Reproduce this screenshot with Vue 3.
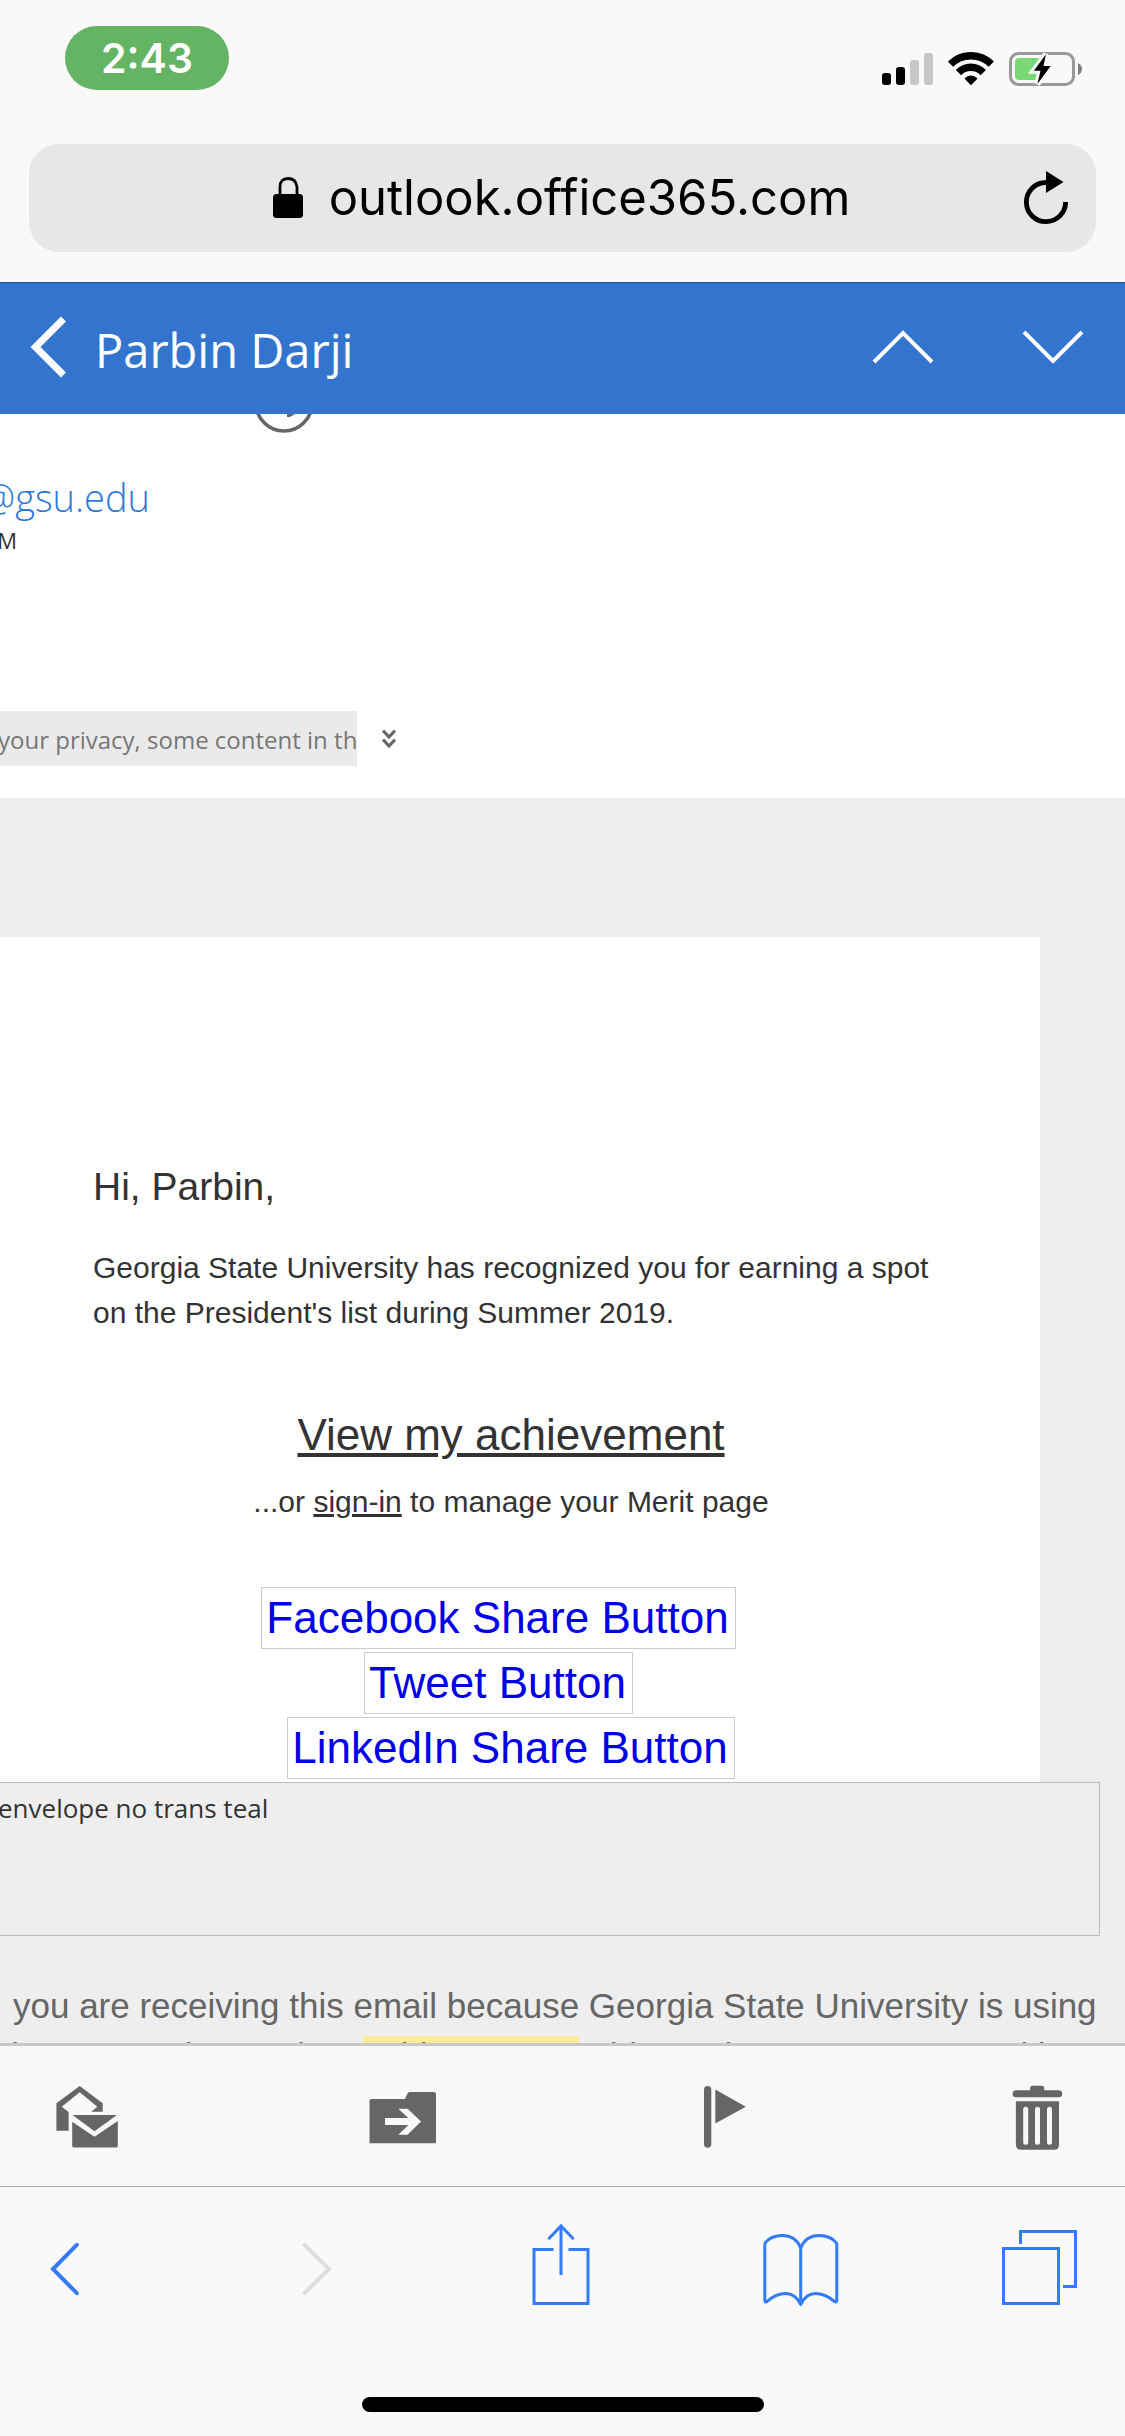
<template>
  <div class="phone">
    <header class="status">
      <span class="status__time">2:43</span>
      <div class="status__icons">
        <svg width="51" height="34" viewBox="0 0 51 34">
          <rect x="0" y="21" width="9" height="12" rx="3" />
          <rect x="14" y="15" width="9" height="18" rx="3" />
          <rect x="28" y="8" width="9" height="25" rx="3" fill="#c7c7c7" />
          <rect x="42" y="1" width="9" height="32" rx="3" fill="#c7c7c7" />
        </svg>
        <svg width="46" height="34" viewBox="0 0 46 34">
          <path d="M2.5 12.2A28.7 28.7 0 0 1 43.3 12.2" fill="none" stroke="#000" stroke-width="7.4" />
          <path d="M10.5 20.6A17 17 0 0 1 35.3 20.6" fill="none" stroke="#000" stroke-width="7.4" />
          <path d="M16.4 26.4Q22.9 20.6 29.6 26.4L23 33.2Z" />
        </svg>
        <svg width="73" height="34" viewBox="0 0 73 34">
          <rect x="1.5" y="1.5" width="63" height="31" rx="8" fill="none" stroke="#999" stroke-width="3" />
          <path d="M69 11Q73 13 73 17T69 23Z" fill="#808080" />
          <path d="M10 6H31L27 28H10Q6 28 6 24V10Q6 6 10 6Z" fill="#78d873" />
          <path d="M37 2.3L24.8 18.7H31.5L28.4 32L41.7 14H34.5Z" stroke="#f9f9f9" stroke-width="6" paint-order="stroke" />
        </svg>
      </div>
    </header>

    <div class="address">
      <div class="address__bar">
        <button class="address__url" type="button">
          <svg width="30" height="42" viewBox="0 0 30 42">
            <path d="M7 18V10Q7 1.5 15 1.5T24 10V18" fill="none" stroke="#000" stroke-width="2.8" />
            <rect x="0" y="17" width="30" height="24" rx="3.5" />
          </svg>
          <span>outlook.office365.com</span>
        </button>
        <button type="button" aria-label="Reload">
          <svg width="44" height="54" viewBox="0 0 44 54">
            <path d="M22 11.500A19.600 19.600 0 1 0 41.600 31" fill="none" stroke="#000" stroke-width="4.800" />
            <path d="M22 0L39.500 11L22 22Z" />
          </svg>
        </button>
      </div>
    </div>

    <nav class="titlebar">
      <button type="button" aria-label="Back">
        <svg width="38" height="62" viewBox="0 0 38 62">
          <path d="M34.500 3L6.500 31L34.500 59" fill="none" stroke="#fff" stroke-width="7" />
        </svg>
      </button>
      <h1 class="titlebar__name">Parbin Darji</h1>
      <div class="titlebar__arrows">
        <button type="button" aria-label="Previous message">
          <svg width="62" height="36" viewBox="0 0 62 36">
            <path d="M2 33L31 4L60 33" fill="none" stroke="#fff" stroke-width="4" />
          </svg>
        </button>
        <button type="button" aria-label="Next message">
          <svg width="62" height="36" viewBox="0 0 62 36">
            <path d="M2 3L31 32L60 3" fill="none" stroke="#fff" stroke-width="4" />
          </svg>
        </button>
      </div>
    </nav>

    <main class="mail">
      <div class="mail__head">
        <svg class="mail__clock" width="60" height="20" viewBox="0 0 60 20">
          <circle cx="30" cy="-11" r="28" fill="none" stroke="#666" stroke-width="3.600" />
          <path d="M33 0H41L36 3H33Z" fill="#666" />
        </svg>
        <a class="mail__from" href="#">@gsu.edu</a>
        <span class="mail__date">M</span>
      </div>

      <div class="privacy">
        <p class="privacy__text">your privacy, some content in this message has been blocked.</p>
        <button type="button" aria-label="Show more">
          <svg width="14" height="20" viewBox="0 0 14 20">
            <path d="M1 1.500L7 8L13 1.500M1 10.500L7 17L13 10.500" fill="none" stroke="#666" stroke-width="3" />
          </svg>
        </button>
      </div>

      <article class="letter">
        <section class="card">
          <p class="card__hi">Hi, Parbin,</p>
          <p class="card__text">
            Georgia State University has recognized you for earning a spot<br />
            on the President's list during Summer 2019.
          </p>
          <a class="card__view" href="#">View my achievement</a>
          <p class="card__signin">...or <a href="#">sign-in</a> to manage your Merit page</p>
          <ul class="shares">
            <li v-for="s in shares" :key="s.label" :class="{ 'shares__item--spaced': s.spaced }">
              <a class="shares__link" href="#">{{ s.label }}</a>
            </li>
          </ul>
        </section>
        <div class="missing">envelope no trans teal</div>
        <footer class="notice">
          <p class="notice__first">you are receiving this email because Georgia State University is using</p>
          <p>Merit to recognize student <mark>achievements</mark> This Merit page was created by</p>
        </footer>
      </article>
    </main>

    <div class="actions">
      <button type="button" aria-label="Mark as unread">
        <svg width="70" height="70" viewBox="0 0 70 70" fill="#666">
          <path d="M29.700 5L52.700 22.300V30.700H41.200L47.300 25.700L29.700 11.300L11.800 25.700L18.600 31V49.700H6.400V22.300Z" />
          <path d="M22.500 34H67L44.500 50.300Z" />
          <path d="M22.200 40.700L44.500 55.700L67.800 40V65Q67.800 66.400 66.400 66.400H23.600Q22.200 66.400 22.200 65Z" />
        </svg>
      </button>
      <button type="button" aria-label="Move to folder">
        <svg width="70" height="70" viewBox="0 0 70 70" fill="#666">
          <path d="M1.500 20Q1.500 18 3.500 18H37L39.500 12.500Q40 11 42 11H66Q68 11 68 13V62.300H1.500Z" />
          <path d="M17 37H40.300L30.300 27.700H39.600L53 40.400L39.600 53.700H30.300L40.300 44H17Z" fill="#f8f8f8" />
        </svg>
      </button>
      <button type="button" aria-label="Flag">
        <svg width="70" height="70" viewBox="0 0 70 70" fill="#666">
          <rect x="17" y="5" width="7.300" height="61.700" rx="3.600" />
          <path d="M28.300 8.500L58.800 25.700L28.300 42.500Z" />
        </svg>
      </button>
      <button type="button" aria-label="Delete">
        <svg width="70" height="70" viewBox="0 0 70 70" fill="#666">
          <path d="M25.200 10V7Q25.200 4.700 27.500 4.700H37Q39.200 4.700 39.200 7V10Z" />
          <rect x="7.600" y="9.300" width="49.600" height="7" rx="3.500" />
          <path d="M10.900 20.300H54V63.700Q54 68.700 49 68.700H16Q10.900 68.700 10.900 63.700Z" />
          <g fill="#f8f8f8">
            <rect x="18.200" y="25.700" width="5" height="38" rx="2.500" />
            <rect x="30" y="25.700" width="5" height="38" rx="2.500" />
            <rect x="42" y="25.700" width="5" height="38" rx="2.500" />
          </g>
        </svg>
      </button>
    </div>

    <nav class="browser">
      <div class="browser__row">
        <button type="button" aria-label="Go back">
          <svg width="80" height="90" viewBox="0 0 80 90">
            <path d="M28.800 24.800L5 49L28.800 73.200" stroke-width="4" stroke-linecap="round" />
          </svg>
        </button>
        <button type="button" aria-label="Go forward" disabled>
          <svg width="80" height="90" viewBox="0 0 80 90">
            <path d="M19.600 24.800L44 49L19.600 73.200" stroke-width="4" stroke-linecap="round" />
          </svg>
        </button>
        <button type="button" aria-label="Share">
          <svg width="80" height="90" viewBox="0 0 80 90">
            <path d="M30.500 29.500H11V83.500H65V29.500H45.500M38 55V6" />
            <path d="M26.200 18.200L38 6L49.800 18.200" stroke-linecap="round" />
          </svg>
        </button>
        <button type="button" aria-label="Bookmarks">
          <svg width="80" height="90" viewBox="0 0 80 90" stroke-linejoin="round">
            <path
              d="M40.700 28C37 19 30 15.500 22.500 15.500C15 15.500 8 18.500 5.500 22.500Q4.800 23.500 4.800 25V80.500Q5 83 7 81.500C13 76 20 73.500 26 73.500C33 73.500 37 77 40.700 84.500
                 M40.700 28C44.400 19 51.400 15.500 58.900 15.500C66.400 15.500 73.400 18.500 76 22.500Q76.800 23.500 76.800 25V80.500Q76.600 83 74.600 81.500C68 76 61 73.500 55.400 73.500C48.400 73.500 44.400 77 40.700 84.500V28"
            />
          </svg>
        </button>
        <button type="button" aria-label="Tabs">
          <svg width="80" height="90" viewBox="0 0 80 90">
            <path d="M6.500 28.500H61.500V83.500H6.500ZM23.500 24V11.500H78.500V66.500H66" />
          </svg>
        </button>
      </div>
      <div class="browser__home"></div>
    </nav>
  </div>
</template>

<script setup>
// image placeholders, the first two are followed by a gap
const shares = [
  { label: 'Facebook Share Button', spaced: true },
  { label: 'Tweet Button', spaced: true },
  { label: 'LinkedIn Share Button', spaced: false },
]
</script>

<style>
body {
  margin: 0;
}
</style>

<style scoped>
.phone {
  height: 100vh;
  display: flex;
  flex-direction: column;
  overflow: hidden;
  background: #f9f9f9;
  color: #333;
  font-family: 'Liberation Sans', Arial, sans-serif;
}
p,
h1,
ul {
  margin: 0;
  padding: 0;
}
button {
  padding: 0;
  border: 0;
  background: none;
  font: inherit;
  color: inherit;
}
svg {
  display: block;
  flex: none;
}

.status {
  display: flex;
  justify-content: space-between;
  align-items: flex-start;
  padding: 26px 43px 54px 65px;
}
.status__time {
  width: 164px;
  border-radius: 32px;
  background: #65b463;
  color: #fff;
  font: 600 41px/64px Inter, sans-serif;
  text-align: center;
}
.status__icons {
  display: flex;
  gap: 15px;
  padding-top: 26px;
}

.address {
  padding: 0 29px 30px;
}
.address__bar {
  display: flex;
  align-items: center;
  height: 108px;
  padding: 0 28px 0 70px;
  border-radius: 30px;
  background: #e6e7e9;
}
.address__url {
  flex: 1;
  display: flex;
  justify-content: center;
  align-items: center;
  gap: 26px;
  color: #000;
  font: 400 49px/60px Inter, sans-serif;
}

.titlebar {
  display: flex;
  align-items: center;
  height: 127px;
  padding: 0 41px 4px 29px;
  border-top: 1px solid #24508f;
  background: #3375ce;
  color: #fff;
}
.titlebar__name {
  flex: 1;
  padding: 6px 0 0 28px;
  font: 400 47px/64px 'Open Sans', sans-serif;
}
.titlebar__arrows {
  display: flex;
  gap: 88px;
}

.mail {
  flex: 1;
  min-height: 0;
  overflow: hidden;
  background: #fff;
}
.mail__head {
  display: flex;
  flex-direction: column;
  align-items: flex-start;
  height: 297px;
  font-family: 'Open Sans', sans-serif;
}
.mail__clock {
  margin: 0 0 36px 254px;
}
.mail__from {
  display: flex;
  justify-content: flex-end;
  width: 150px;
  color: #2f7ad6;
  font-size: 38px;
  font-weight: 300;
  line-height: 55px;
  text-decoration: none;
}
.mail__date {
  display: flex;
  justify-content: flex-end;
  width: 17px;
  font-size: 22px;
  line-height: 30px;
}
.privacy {
  display: flex;
  align-items: center;
  gap: 25px;
  margin-bottom: 32px;
}
.privacy__text {
  width: 357px;
  padding-top: 3px;
  overflow: hidden;
  background: #eaeaea;
  color: #777;
  font: 400 24px/52px 'Open Sans', sans-serif;
  text-indent: -2px;
  white-space: nowrap;
}

.letter {
  padding-top: 139px;
  background: #eee;
}
.card {
  display: flex;
  flex-direction: column;
  margin-right: 85px;
  padding: 222px 18px 3px 0;
  background: #fff;
}
.card__hi,
.card__text {
  padding-left: 93px;
}
.card__hi {
  font-size: 39px;
  line-height: 56px;
}
.card__text {
  padding-top: 30px;
  font-size: 30px;
  line-height: 45px;
  white-space: nowrap;
}
.card__view {
  align-self: center;
  margin-top: 70px;
  color: inherit;
  font-size: 44px;
  line-height: 60px;
  text-underline-offset: 3px;
}
.card__signin {
  padding: 14px 0 63px;
  font-size: 30px;
  line-height: 45px;
  text-align: center;
}
.card__signin a {
  color: inherit;
}
.shares {
  display: flex;
  flex-direction: column;
  align-items: center;
  gap: 3px;
  list-style: none;
}
.shares__item--spaced {
  padding-right: 25px;
}
.shares__link {
  display: block;
  padding: 0 6px 0 4px;
  border: 1px solid #ccc;
  color: #0000e6;
  font-size: 44px;
  line-height: 60px;
  text-decoration: none;
}
.missing {
  height: 152px;
  margin-right: 25px;
  border: solid #bbb;
  border-width: 1px 1px 1px 0;
  background: #eee;
  font: 400 26px/50px 'Open Sans', sans-serif;
  text-indent: -2px;
}
.notice {
  margin-left: -49px;
  padding-top: 45px;
  color: #666;
  font-size: 35px;
  line-height: 50px;
  white-space: nowrap;
}
.notice__first {
  padding-left: 62px;
}
.notice mark {
  background: #fdec9a;
  color: inherit;
}

.actions {
  display: flex;
  justify-content: space-between;
  padding: 35px 50px;
  border-top: 3px solid #c8c8c8;
  border-bottom: 1px solid #aaa;
  background: #f8f8f8;
}
.browser {
  padding: 33px 48px 24px;
}
.browser__row {
  display: flex;
  justify-content: space-between;
  color: #347bf7;
}
.browser__row svg {
  fill: none;
  stroke: currentColor;
  stroke-width: 3;
}
.browser__row button:disabled {
  color: #ddd;
}
.browser__home {
  width: 402px;
  height: 15px;
  margin: 87px auto 0;
  border-radius: 8px;
  background: #000;
}
</style>
